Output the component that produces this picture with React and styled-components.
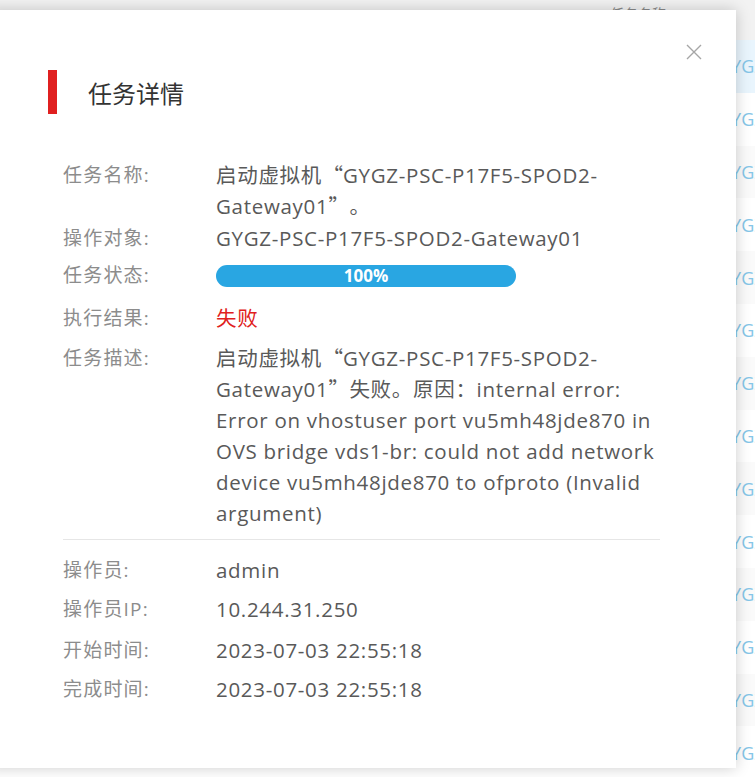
import React from "react";
import styled, { createGlobalStyle } from "styled-components";

const GlobalStyle = createGlobalStyle`
  html, body { margin: 0; padding: 0; background: #fff; }
  body { font-family: "Open Sans", "Noto Sans CJK SC", sans-serif; }
  #root { width: 755px; height: 777px; }
`;

const Page = styled.div`
  position: relative;
  width: 755px;
  height: 777px;
  overflow: hidden;
  background: #fff;
`;

const Grid = styled.div`
  display: flex;
  flex-direction: column;
`;

const HeadRow = styled.div`
  display: flex;
  align-items: flex-start;
  height: 40px;
  padding-top: 2px;
  box-sizing: border-box;
  background: #f2f2f2;
`;

const BodyRow = styled.div`
  display: flex;
  align-items: center;
  height: 52.8px;
  background: ${({ $variant }) =>
    $variant === "active" ? "#e9f5fd" : $variant === "alt" ? "#fafafa" : "#ffffff"};
`;

const Cell = styled.div`
  flex: none;
  width: ${({ $w }) => $w}px;
  white-space: nowrap;
  overflow: hidden;
`;

const HeadText = styled.span`
  font: 400 14px "Noto Sans CJK SC", sans-serif;
  color: #8a8a8a;
`;

const LinkText = styled.span`
  font-size: 18px;
  color: #86c6e8;
`;

const Modal = styled.div`
  position: absolute;
  left: -12px;
  top: 10px;
  width: 748px;
  height: 758px;
  box-sizing: border-box;
  background: #fff;
  box-shadow: 0 0 14px rgba(0, 0, 0, 0.2);
  padding: 60px 0 0 60px;
`;

const Header = styled.div`
  display: flex;
  align-items: center;
  gap: 31px;
  height: 44px;
`;

const Accent = styled.span`
  flex: none;
  width: 9px;
  height: 44px;
  background: #e02020;
`;

const Title = styled.h2`
  margin: 2px 0 0;
  font: 400 24px "Noto Sans CJK SC", sans-serif;
  line-height: 1;
  color: #333;
`;

const CloseButton = styled.button`
  position: absolute;
  top: 34px;
  right: 34px;
  width: 16px;
  height: 16px;
  padding: 0;
  border: 0;
  background: none;
  cursor: pointer;
  display: flex;
`;

const Body = styled.div`
  margin-top: 46px;
  padding-left: 15px;
  width: 597px;
`;

const Field = styled.div`
  display: flex;
  margin-top: ${({ $mt }) => $mt || 0}px;
  line-height: 31px;
`;

const Label = styled.div`
  flex: none;
  width: 153px;
  font-size: 19px;
  letter-spacing: 1.2px;
  color: #8c8c8c;
`;

const Value = styled.div`
  flex: none;
  width: 455px;
  font-size: 20.5px;
  letter-spacing: 0.7px;
  color: ${({ $danger }) => ($danger ? "#e02020" : "#595959")};
`;

const BarSlot = styled.div`
  flex: none;
  height: 31px;
  display: flex;
  align-items: center;
`;

const Progress = styled.div`
  width: 300px;
  height: 22px;
  border-radius: 11px;
  background: #29a6e2;
  display: flex;
  align-items: center;
  justify-content: center;
  color: #fff;
  font: 700 17px "Open Sans", sans-serif;
  line-height: 1;
`;

const Quote = styled.span`
  display: inline-block;
  width: 21px;
  text-align: ${({ $open }) => ($open ? "right" : "left")};
  letter-spacing: 0;
  font-family: "Noto Sans CJK SC", sans-serif;
  line-height: 1;
`;

const Divider = styled.hr`
  margin: 10px 0 0;
  border: 0;
  border-top: 1px solid #e6e6e6;
  width: 597px;
`;

const CloseIcon = () => (
  <svg width="16" height="16" viewBox="0 0 16 16">
    <path d="M1 1 L15 15 M15 1 L1 15" stroke="#a6a6a6" strokeWidth="1.4" fill="none" />
  </svg>
);

const rows = Array.from({ length: 14 }, (_, i) => (i === 0 ? "active" : i % 2 === 0 ? "alt" : "plain"));

export default function App() {
  return (
    <>
      <GlobalStyle />
      <Page>
        <Grid>
          <HeadRow>
            <Cell $w={610} />
            <Cell $w={145}>
              <HeadText>任务名称</HeadText>
            </Cell>
          </HeadRow>
          {rows.map((v, i) => (
            <BodyRow key={i} $variant={v}>
              <Cell $w={718} />
              <Cell $w={37}>
                <LinkText>GYGZ-PSC-P17F5-SPOD2-Gateway01</LinkText>
              </Cell>
            </BodyRow>
          ))}
        </Grid>

        <Modal>
          <CloseButton aria-label="close">
            <CloseIcon />
          </CloseButton>
          <Header>
            <Accent />
            <Title>任务详情</Title>
          </Header>
          <Body>
            <Field>
              <Label>任务名称:</Label>
              <Value>
                启动虚拟机<Quote $open>“</Quote>GYGZ-PSC-P17F5-SPOD2-Gateway01<Quote>”</Quote>。
              </Value>
            </Field>
            <Field $mt={1}>
              <Label>操作对象:</Label>
              <Value>GYGZ-PSC-P17F5-SPOD2-Gateway01</Value>
            </Field>
            <Field $mt={6}>
              <Label>任务状态:</Label>
              <BarSlot>
                <Progress>100%</Progress>
              </BarSlot>
            </Field>
            <Field $mt={12}>
              <Label>执行结果:</Label>
              <Value $danger>失败</Value>
            </Field>
            <Field $mt={9}>
              <Label>任务描述:</Label>
              <Value>
                启动虚拟机<Quote $open>“</Quote>GYGZ-PSC-P17F5-SPOD2-Gateway01<Quote>”</Quote>失败。原因：internal
                error: Error on vhostuser port vu5mh48jde870 in OVS bridge vds1-br: could not add network device
                vu5mh48jde870 to ofproto (Invalid argument)
              </Value>
            </Field>
            <Divider />
            <Field $mt={15}>
              <Label>操作员:</Label>
              <Value>admin</Value>
            </Field>
            <Field $mt={8}>
              <Label>操作员IP:</Label>
              <Value>10.244.31.250</Value>
            </Field>
            <Field $mt={10}>
              <Label>开始时间:</Label>
              <Value>2023-07-03 22:55:18</Value>
            </Field>
            <Field $mt={8}>
              <Label>完成时间:</Label>
              <Value>2023-07-03 22:55:18</Value>
            </Field>
          </Body>
        </Modal>
      </Page>
    </>
  );
}
